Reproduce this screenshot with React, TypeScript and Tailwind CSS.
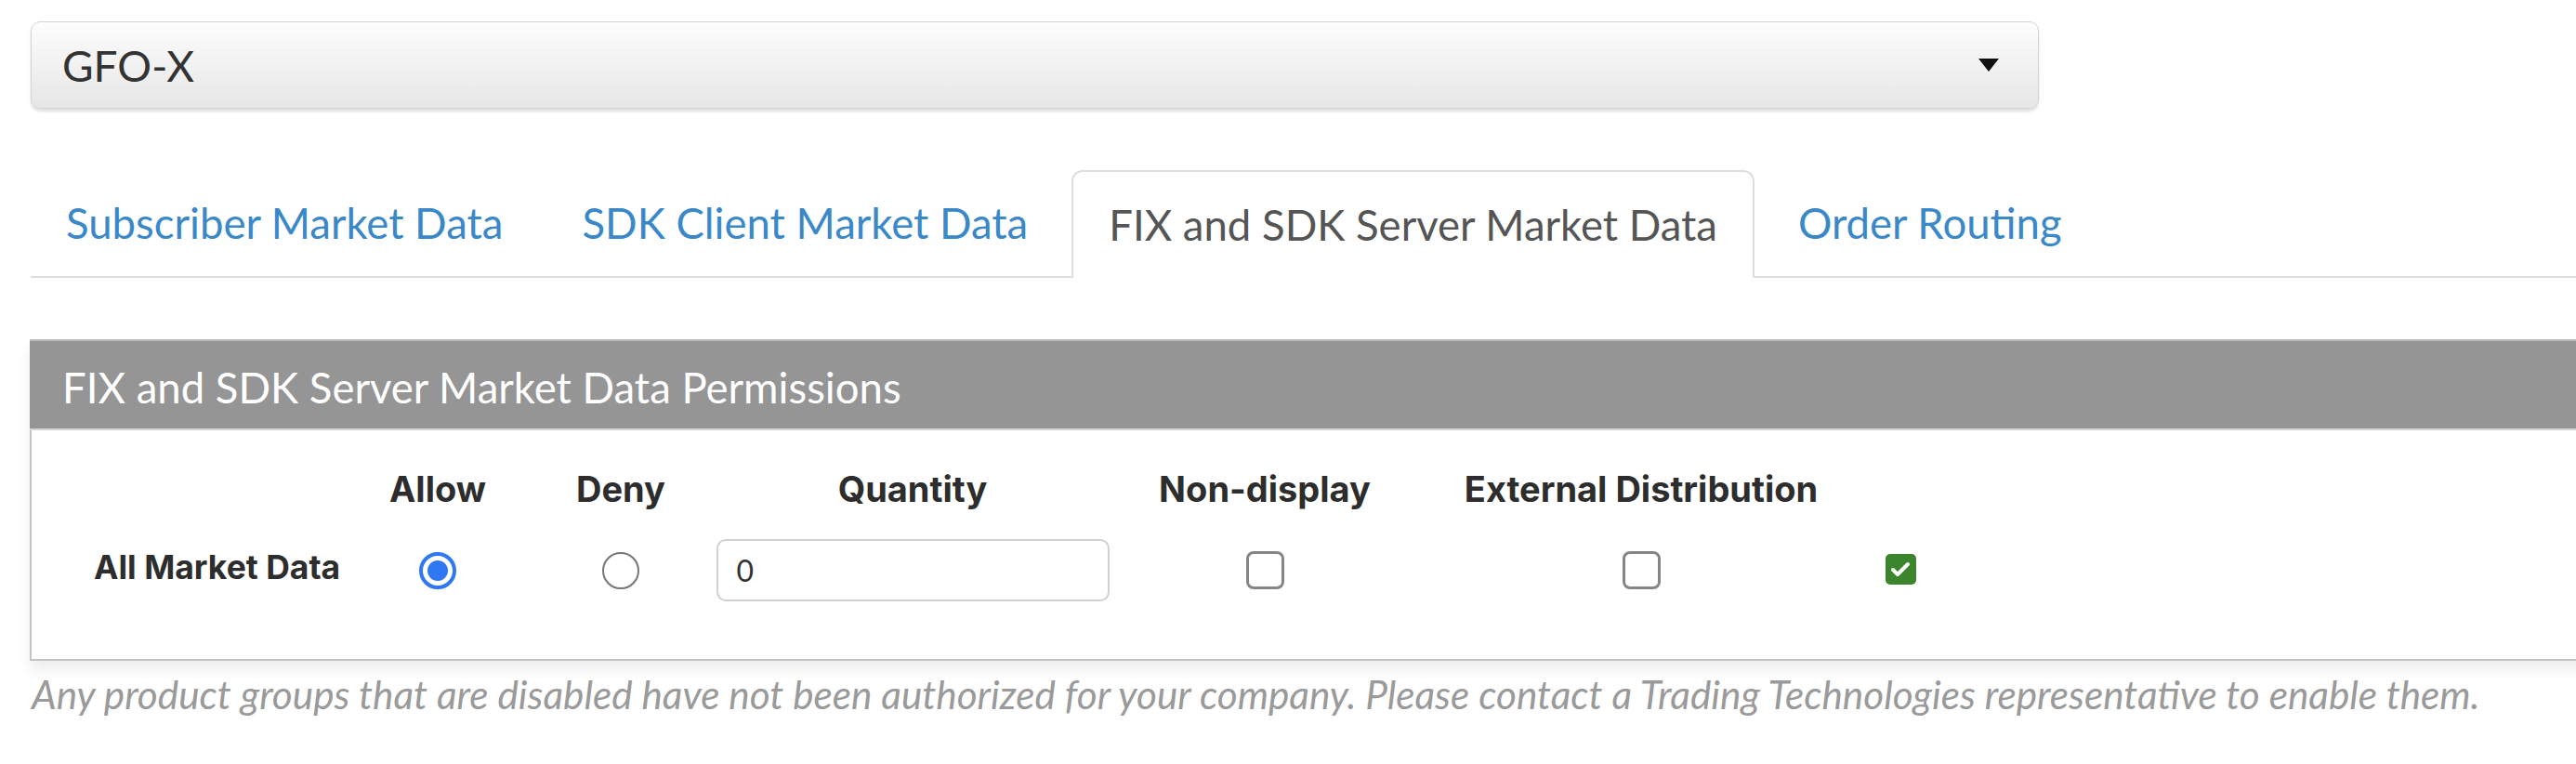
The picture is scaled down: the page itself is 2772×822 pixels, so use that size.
import { Check } from 'lucide-react';

const tabs = ['Subscriber Market Data', 'SDK Client Market Data', 'FIX and SDK Server Market Data', 'Order Routing'];
const active = 2;

const sans = "font-['Lato','Noto_Sans',sans-serif]";
const bold = "font-['Inter','Liberation_Sans',sans-serif] font-bold";

function Radio({ checked }: { checked: boolean }) {
  if (checked) {
    return (
      <div className="w-[40px] h-[40px] rounded-full border-[4px] border-[#2f78f4] flex items-center justify-center">
        <div className="w-[22px] h-[22px] rounded-full bg-[#2f78f4]" />
      </div>
    );
  }
  return <div className="w-[40px] h-[40px] rounded-full border-[2px] border-[#767676]" />;
}

function Box() {
  return <div className="w-[41px] h-[41px] rounded-[8px] border-[3px] border-[#858585] bg-white" />;
}

export default function App() {
  return (
    <div className={`w-[2772px] h-[822px] overflow-hidden bg-white pt-[23px] ${sans}`}>
      {/* product group select */}
      <div className="ml-[33px] w-[2161px] h-[94px] rounded-[10px] border border-[#d4d4d4] bg-gradient-to-b from-[#fdfdfd] to-[#e6e6e6] shadow-[0_3px_3px_rgba(0,0,0,0.12)] flex items-center justify-between pl-[33px] pr-[42px]">
        <span className="text-[46px] text-[#333]">GFO-X</span>
        <svg width="22" height="14" viewBox="0 0 22 14">
          <path d="M0 0 H22 L11 14 Z" fill="#111" />
        </svg>
      </div>

      {/* tabs */}
      <div className="mt-[66px] ml-[33px] flex items-end gap-[9px] border-b-[2px] border-[#dedede] h-[116px]">
        {tabs.map((t, i) =>
          i === active ? (
            <div
              key={t}
              className="h-[116px] -mb-[2px] px-[38px] flex items-center bg-white border-[2px] border-b-0 border-[#dedede] rounded-t-[12px] text-[45.5px] text-[#555]"
            >
              {t}
            </div>
          ) : (
            <div key={t} className="h-[114px] px-[38px] flex items-center text-[45.5px] text-[#3b88c9]">
              {t}
            </div>
          )
        )}
      </div>

      {/* permissions panel */}
      <div className="mt-[66px] ml-[32px] w-[2760px] shadow-[0_10px_14px_rgba(0,0,0,0.07)]">
        <div className="h-[98px] bg-[#959595] border-t-[2px] border-[#b8b8b8] border-b-[2px] border-b-[#d6d6d6] pl-[35px] flex items-center pt-[6px]">
          <span className="text-[45.5px] text-white">FIX and SDK Server Market Data Permissions</span>
        </div>
        <div className="h-[248px] border-l-[2px] border-b-[2px] border-[#c4c4c4] bg-white pt-[41px]">
          <div className={`grid grid-cols-[334px_206px_188px_440px_318px_492px_66px] items-center justify-items-center ${bold} text-[38px] leading-[44px] text-[#2d2d2d]`}>
            <div />
            <div>Allow</div>
            <div>Deny</div>
            <div>Quantity</div>
            <div>Non-display</div>
            <div>External Distribution</div>
            <div />

            <div className="justify-self-start pl-[67px] whitespace-nowrap mt-[32px] -translate-y-[3px] text-[35.5px]">All Market Data</div>
            <div className="mt-[32px]"><Radio checked /></div>
            <div className="mt-[32px]"><Radio checked={false} /></div>
            <div className="mt-[32px] w-[423px] h-[67px] rounded-[10px] border-[2px] border-[#d0d0d0] flex items-center pl-[20px]">
              <span className={`${sans} font-normal text-[32px] text-[#333]`}>0</span>
            </div>
            <div className="mt-[32px]"><Box /></div>
            <div className="mt-[32px]"><Box /></div>
            <div className="mt-[32px] self-start pt-[16px]">
              <div className="w-[33px] h-[33px] rounded-[5px] bg-[#3b862c] flex items-center justify-center">
                <Check className="w-[24px] h-[24px] text-white" strokeWidth={4} />
              </div>
            </div>
          </div>
        </div>
      </div>

      <p className="ml-[34px] mt-[4px] italic text-[42.3px] text-[#9a9a9a] whitespace-nowrap">
        Any product groups that are disabled have not been authorized for your company. Please contact a Trading Technologies representative to enable them.
      </p>
    </div>
  );
}
